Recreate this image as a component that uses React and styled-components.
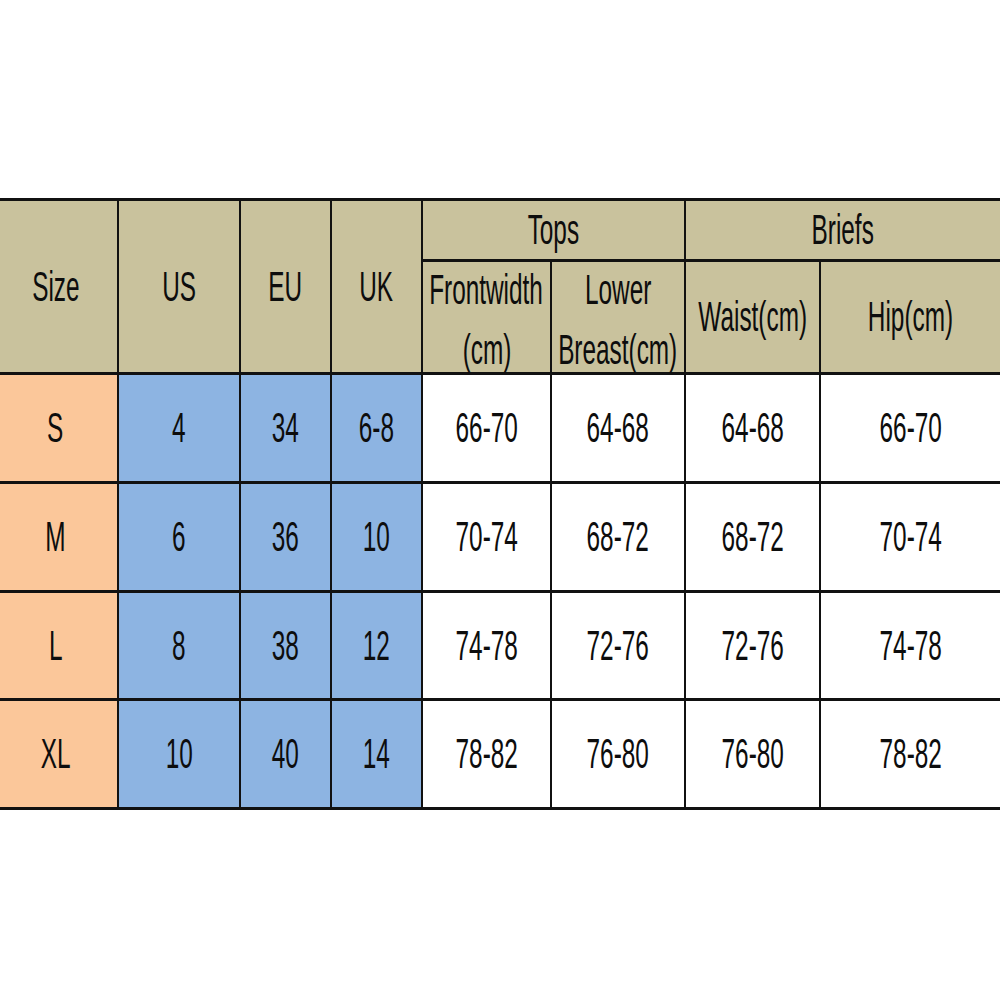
import React from 'react';
import styled, { createGlobalStyle } from 'styled-components';

const GlobalStyle = createGlobalStyle`
  html, body {
    margin: 0;
    padding: 0;
    background: #ffffff;
  }
`;

const TAN = '#c9c29d';
const ORANGE = '#fbc79a';
const BLUE = '#8db4e2';

const rows = [
  ['S', '4', '34', '6-8', '66-70', '64-68', '64-68', '66-70'],
  ['M', '6', '36', '10', '70-74', '68-72', '68-72', '70-74'],
  ['L', '8', '38', '12', '74-78', '72-76', '72-76', '74-78'],
  ['XL', '10', '40', '14', '78-82', '76-80', '76-80', '78-82'],
];

const App = () => {
  return (
    <>
      <GlobalStyle />
      <Page>
        <Chart>
          <Cell $bg={TAN} $row="1 / span 2" $col="1">
            <Label $shift="-3px">Size</Label>
          </Cell>
          <Cell $bg={TAN} $row="1 / span 2" $col="2">
            <Label>US</Label>
          </Cell>
          <Cell $bg={TAN} $row="1 / span 2" $col="3">
            <Label>EU</Label>
          </Cell>
          <Cell $bg={TAN} $row="1 / span 2" $col="4">
            <Label>UK</Label>
          </Cell>
          <Cell $bg={TAN} $row="1" $col="5 / span 2">
            <Label>Tops</Label>
          </Cell>
          <Cell $bg={TAN} $row="1" $col="7 / span 2" $last>
            <Label>Briefs</Label>
          </Cell>
          <Cell $bg={TAN} $row="2" $col="5">
            <Stack>
              <Label>Frontwidth</Label>
              <Label>(cm)</Label>
            </Stack>
          </Cell>
          <Cell $bg={TAN} $row="2" $col="6">
            <Stack>
              <Label>Lower</Label>
              <Label>Breast(cm)</Label>
            </Stack>
          </Cell>
          <Cell $bg={TAN} $row="2" $col="7">
            <Label>Waist(cm)</Label>
          </Cell>
          <Cell $bg={TAN} $row="2" $col="8" $last>
            <Label>Hip(cm)</Label>
          </Cell>

          {rows.map((r, ri) =>
            r.map((v, ci) => (
              <Cell
                key={ri + '-' + ci}
                $bg={ci === 0 ? ORANGE : ci < 4 ? BLUE : '#ffffff'}
                $row={String(ri + 3)}
                $col={String(ci + 1)}
                $last={ci === 7}
              >
                <Label $shift={ci === 0 ? '-3px' : '0px'}>{v}</Label>
              </Cell>
            ))
          )}
        </Chart>
      </Page>
    </>
  );
};

const Page = styled.div`
  width: 1000px;
  height: 1000px;
  padding-top: 198px;
  box-sizing: border-box;
  overflow: hidden;
`;

const Chart = styled.div`
  display: grid;
  grid-template-columns: 119px 122px 91px 91px 129px 134px 135px 1fr;
  grid-template-rows: 61px 113px 109px 109px 108px 109px;
  border-top: 3px solid #111;
  width: 1000px;
`;

const Cell = styled.div`
  grid-row: ${(p) => p.$row};
  grid-column: ${(p) => p.$col};
  background: ${(p) => p.$bg};
  border-right: ${(p) => (p.$last ? 'none' : '2px solid #111')};
  border-bottom: 3px solid #111;
  box-sizing: border-box;
  display: flex;
  align-items: center;
  justify-content: center;
  overflow: visible;
  min-width: 0;
`;

const Stack = styled.div`
  display: flex;
  flex-direction: column;
  align-items: center;
  line-height: 60px;
  margin-top: 6px;
`;

const Label = styled.span`
  display: inline-block;
  font-family: 'Liberation Sans', Arial, sans-serif;
  font-size: 42px;
  color: #0d0d0d;
  white-space: nowrap;
  transform: translateX(${(p) => p.$shift || '0px'}) scaleX(0.58);
  transform-origin: center;
`;

export default App;
